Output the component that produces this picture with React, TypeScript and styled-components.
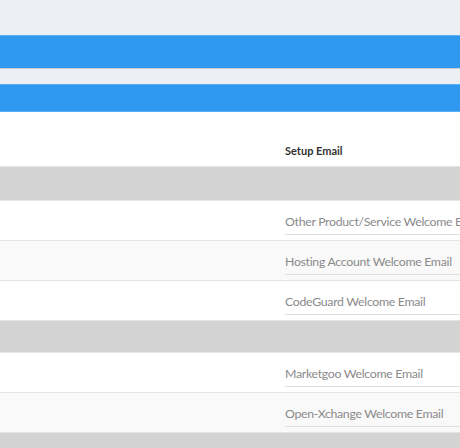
import React from "react";
import styled, { createGlobalStyle } from "styled-components";

const Global = createGlobalStyle`
  html, body { margin: 0; padding: 0; background: #ffffff; }
  body { font-family: "Lato", "Open Sans", sans-serif; overflow: hidden; }
`;

const Page = styled.div`
  width: 460px;
  height: 448px;
  overflow: hidden;
  background: #ffffff;
`;

const TopArea = styled.div`
  height: 35px;
  background: #eceff4;
`;

const NavBar = styled.div<{ $h: number; $topLine: string; $bottomLine: string }>`
  box-sizing: border-box;
  height: ${(p) => p.$h}px;
  background: #2e99ee;
  border-top: 1px solid ${(p) => p.$topLine};
  border-bottom: 1px solid ${(p) => p.$bottomLine};
`;

const Spacer = styled.div`
  height: 15px;
  background: #eceff4;
`;

const Table = styled.div`
  display: flex;
  flex-direction: column;
`;

const HeaderRow = styled.div`
  box-sizing: border-box;
  height: 55px;
  display: grid;
  grid-template-columns: 285px 1fr;
  align-items: end;
  padding-bottom: 8px;
  border-bottom: 1px solid #e4e4e4;
`;

const HeaderCell = styled.div`
  font-size: 11px;
  font-weight: 700;
  color: #333333;
  white-space: nowrap;
  line-height: 14px;
`;

const GroupRow = styled.div<{ $h: number }>`
  box-sizing: border-box;
  height: ${(p) => p.$h}px;
  background: #d3d3d3;
  border-bottom: 1px solid #e8e8e8;
`;

const Row = styled.div<{ $striped?: boolean }>`
  box-sizing: border-box;
  height: 40px;
  display: grid;
  grid-template-columns: 285px 1fr;
  padding-top: 7px;
  background: ${(p) => (p.$striped ? "#f9f9f9" : "#ffffff")};
  border-bottom: 1px solid #e4e4e4;
`;

const SelectBox = styled.div`
  box-sizing: border-box;
  height: 27px;
  display: flex;
  align-items: center;
  border-bottom: 1px solid #dedede;
  font-size: 12.3px;
  letter-spacing: -0.3px;
  color: #8a8a8a;
  white-space: nowrap;
  overflow: hidden;
`;

type Item =
  | { kind: "group"; h: number }
  | { kind: "row"; label: string; striped?: boolean };

const items: Item[] = [
  { kind: "group", h: 34 },
  { kind: "row", label: "Other Product/Service Welcome Email" },
  { kind: "row", label: "Hosting Account Welcome Email", striped: true },
  { kind: "row", label: "CodeGuard Welcome Email" },
  { kind: "group", h: 32 },
  { kind: "row", label: "Marketgoo Welcome Email" },
  { kind: "row", label: "Open-Xchange Welcome Email", striped: true },
  { kind: "group", h: 32 },
];

export default function App() {
  return (
    <Page>
      <Global />
      <TopArea />
      <NavBar $h={34} $topLine="#5aaef2" $bottomLine="#c8cdd4" />
      <Spacer />
      <NavBar $h={28} $topLine="#5aaef2" $bottomLine="#5aaef2" />
      <Table>
        <HeaderRow>
          <div />
          <HeaderCell>Setup Email</HeaderCell>
        </HeaderRow>
        {items.map((it, i) =>
          it.kind === "group" ? (
            <GroupRow key={i} $h={it.h} />
          ) : (
            <Row key={i} $striped={it.striped}>
              <div />
              <SelectBox>{it.label}</SelectBox>
            </Row>
          )
        )}
      </Table>
    </Page>
  );
}
